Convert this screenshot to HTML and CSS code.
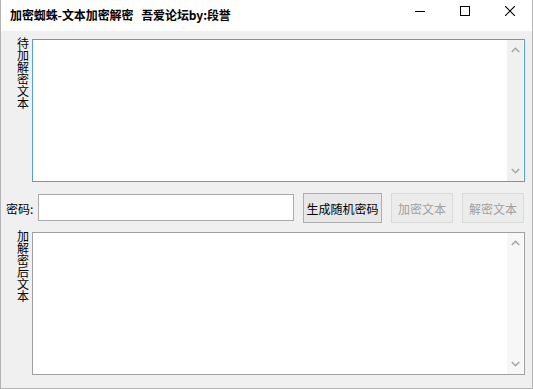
FILE: index.html
```html
<!DOCTYPE html>
<html lang="zh-CN">
<head>
<meta charset="utf-8">
<title>加密蜘蛛</title>
<link rel="stylesheet" href="styles.css">
</head>
<body>
<div class="window">
  <div class="titlebar">
    <div class="title">加密蜘蛛-文本加密解密&nbsp;&nbsp;&nbsp;吾爱论坛by:段誉</div>
    <div class="controls">
      <span class="ctl">
        <svg width="10" height="10" viewBox="0 0 10 10"><path d="M0 5.5H10" stroke="#000" stroke-width="1"/></svg>
      </span>
      <span class="ctl">
        <svg width="10" height="10" viewBox="0 0 10 10"><rect x="0.5" y="0.5" width="9" height="9" fill="none" stroke="#000" stroke-width="1"/></svg>
      </span>
      <span class="ctl">
        <svg width="10" height="10" viewBox="0 0 10 10"><path d="M0 0L10 10M10 0L0 10" stroke="#000" stroke-width="1.1"/></svg>
      </span>
    </div>
  </div>
  <div class="client">
    <div class="row area-row">
      <div class="vlabel">待加解密文本</div>
      <div class="textbox focused">
        <div class="content"></div>
        <div class="scrollbar">
          <svg width="9" height="6" viewBox="0 0 9 6"><path d="M0.8 5L4.5 1.3L8.2 5" fill="none" stroke="#a6a6a6" stroke-width="1.6"/></svg>
          <svg width="9" height="6" viewBox="0 0 9 6"><path d="M0.8 1L4.5 4.7L8.2 1" fill="none" stroke="#a6a6a6" stroke-width="1.6"/></svg>
        </div>
      </div>
    </div>
    <div class="row pwd-row">
      <div class="pwd-label">密码:</div>
      <div class="input"></div>
      <div class="btn">生成随机密码</div>
      <div class="btn disabled enc">加密文本</div>
      <div class="btn disabled dec">解密文本</div>
    </div>
    <div class="row area-row bottom">
      <div class="vlabel">加解密后文本</div>
      <div class="textbox">
        <div class="content"></div>
        <div class="scrollbar light">
          <svg width="9" height="6" viewBox="0 0 9 6"><path d="M0.8 5L4.5 1.3L8.2 5" fill="none" stroke="#a6a6a6" stroke-width="1.6"/></svg>
          <svg width="9" height="6" viewBox="0 0 9 6"><path d="M0.8 1L4.5 4.7L8.2 1" fill="none" stroke="#a6a6a6" stroke-width="1.6"/></svg>
        </div>
      </div>
    </div>
  </div>
</div>
</body>
</html>
```
FILE: styles.css
```css
html, body {
  margin: 0;
  padding: 0;
  background: #f0f0f0;
}
body {
  font-family: "Noto Sans CJK SC", "Microsoft YaHei", sans-serif;
  font-size: 12px;
  color: #000;
}
.window {
  width: 533px;
  height: 389px;
  box-sizing: border-box;
  display: flex;
  flex-direction: column;
  background: #f0f0f0;
  border-left: 1px solid #b4b4b4;
  border-right: 1px solid #b4b4b4;
  border-bottom: 1px solid #b4b4b4;
}
.titlebar {
  height: 31px;
  flex: none;
  background: #fff;
  display: flex;
  align-items: center;
  justify-content: space-between;
  padding-left: 9px;
}
.title {
  font-weight: bold;
  font-size: 12px;
  line-height: 14px;
  margin-top: -1px;
  letter-spacing: -0.1px;
}
.controls {
  display: flex;
  align-self: flex-start;
  margin-top: 6px;
  margin-right: 17px;
}
.ctl {
  display: flex;
  width: 10px;
  height: 10px;
}
.ctl:nth-child(1) { margin-right: 35px; }
.ctl:nth-child(2) { margin-right: 35px; }
.client {
  flex: 1;
  display: flex;
  flex-direction: column;
  padding: 8px 7px 0 0;
}
.row {
  display: flex;
}
.area-row {
  height: 143px;
}
.area-row.bottom {
  margin-top: 9px;
}
.vlabel {
  width: 12px;
  margin-left: 16px;
  margin-right: 3px;
  line-height: 12px;
  font-size: 12px;
  word-break: break-all;
  margin-top: -2px;
}
.textbox {
  flex: 1;
  display: flex;
  box-sizing: border-box;
  border: 1px solid #a0a0a0;
  background: #fff;
}
.textbox.focused {
  border-color: #5a9ce4;
}
.content {
  flex: 1;
}
.scrollbar {
  width: 16px;
  background: #f0f0f0;
  display: flex;
  flex-direction: column;
  justify-content: space-between;
  align-items: center;
  padding: 7px 0 7px;
  margin-right: 1px;
}
.scrollbar.light {
  background: #f7f7f7;
}
.pwd-row {
  margin-top: 11px;
  height: 30px;
  align-items: center;
}
.pwd-label {
  width: 32px;
  padding-left: 5px;
  white-space: nowrap;
  font-size: 12px;
}
.input {
  width: 256px;
  height: 27px;
  box-sizing: border-box;
  border: 1px solid #ababab;
  background: #fff;
  margin-top: -1px;
}
.btn {
  height: 30px;
  box-sizing: border-box;
  border: 1px solid #adadad;
  background: #e7e7e7;
  display: flex;
  align-items: center;
  justify-content: center;
  font-size: 12px;
  width: 79px;
  margin-left: 9px;
}
.btn.disabled {
  width: 62px;
  border-color: #dadada;
  background: #ececec;
  color: #a0a0a0;
}
.btn.enc { margin-left: 9px; }
.btn.dec { margin-left: 9px; }
```
